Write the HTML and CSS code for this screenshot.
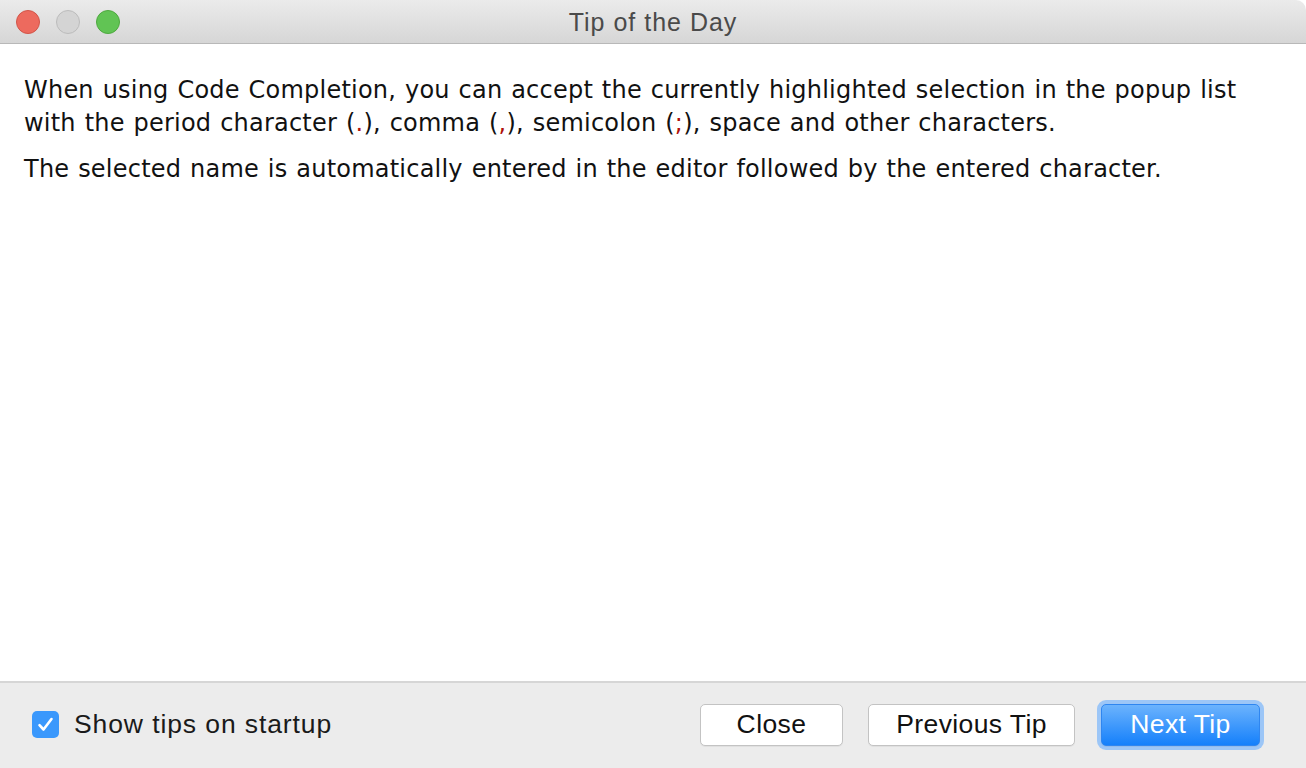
FILE: index.html
```html
<!DOCTYPE html>
<html>
<head>
<meta charset="utf-8">
<link rel="stylesheet" href="styles.css">
</head>
<body>
<div class="window">
  <div class="titlebar">
    <div class="lights">
      <span class="light red"></span>
      <span class="light gray"></span>
      <span class="light green"></span>
    </div>
    <div class="title">Tip of the Day</div>
  </div>
  <div class="content">
    <p class="p1">When using Code Completion, you can accept the currently highlighted selection in the popup list with the period character (<span class="hl">.</span>), comma (<span class="hl">,</span>), semicolon (<span class="hl">;</span>), space and other characters.</p>
    <p class="p2">The selected name is automatically entered in the editor followed by the entered character.</p>
  </div>
  <div class="footer">
    <label class="check">
      <span class="box"><svg width="27" height="27" viewBox="0 0 27 27"><path d="M7.5 14.2 L11.5 18.5 L19.5 8" fill="none" stroke="#fff" stroke-width="2.6" stroke-linecap="round" stroke-linejoin="round"/></svg></span>
      <span class="check-label">Show tips on startup</span>
    </label>
    <div class="buttons">
      <button class="btn close">Close</button>
      <button class="btn prev">Previous Tip</button>
      <span class="focus"><button class="btn primary">Next Tip</button></span>
    </div>
  </div>
</div>
</body>
</html>
```

FILE: styles.css
```css
html, body {
  margin: 0;
  padding: 0;
  width: 1306px;
  height: 768px;
  overflow: hidden;
  background: #ffffff;
}
.window {
  width: 1306px;
  height: 768px;
  display: flex;
  flex-direction: column;
  background: #fff;
}
.titlebar {
  height: 43px;
  flex: none;
  background: linear-gradient(#ebebeb, #d6d6d6);
  border-bottom: 1px solid #b8b8b8;
  border-top-right-radius: 10px;
  display: flex;
  align-items: center;
  position: relative;
}
.lights {
  display: flex;
  gap: 16px;
  padding-left: 16px;
  margin-top: 1px;
}
.light {
  width: 24px;
  height: 24px;
  border-radius: 50%;
  box-sizing: border-box;
}
.red { background: #ed6a5e; border: 1px solid #d25549; }
.gray { background: #d4d4d4; border: 1px solid #bcbcbc; }
.green { background: #61c454; border: 1px solid #4ea93f; }
.title {
  position: absolute;
  left: 0;
  right: 0;
  top: 0;
  height: 43px;
  line-height: 45px;
  text-align: center;
  font-family: "Liberation Sans", Arial, sans-serif;
  font-size: 25px;
  letter-spacing: 1px;
  color: #4a4a4a;
}
.content {
  flex: 1;
  padding: 30px 36px 0 24px;
  font-family: "DejaVu Sans", sans-serif;
  font-size: 24px;
  color: #111;
  letter-spacing: 0.22px;
  word-spacing: 1px;
}
.content p {
  margin: 0;
  line-height: 33px;
}
.p1 { margin-bottom: 13px !important; }
.hl { color: #b0110a; }
.footer {
  height: 87px;
  flex: none;
  box-sizing: border-box;
  background: #ececec;
  border-top: 2px solid #d6d6d6;
  display: flex;
  align-items: center;
  justify-content: space-between;
  padding: 0 42px 2px 32px;
  font-family: "Liberation Sans", Arial, sans-serif;
}
.check {
  display: flex;
  align-items: center;
  gap: 15px;
}
.box {
  width: 27px;
  height: 27px;
  border-radius: 5px;
  background: #3a98fc;
  display: block;
}
.box svg { display: block; }
.check-label {
  font-size: 26.5px;
  letter-spacing: 0.9px;
  color: #1a1a1a;
  font-family: "Liberation Sans", Arial, sans-serif;
}
.buttons {
  display: flex;
  align-items: center;
  gap: 25px;
}
.btn {
  font-family: "Liberation Sans", Arial, sans-serif;
  font-size: 26.5px;
  letter-spacing: 0.4px;
  height: 42px;
  box-sizing: border-box;
  border-radius: 5px;
  background: #fff;
  border: 1px solid #c3c3c3;
  color: #111;
  padding: 0;
  margin: 0;
  box-shadow: 0 1px 0 rgba(0,0,0,0.05);
}
.close { width: 143px; }
.prev { width: 207px; }
.focus {
  display: block;
  padding: 4px;
  border-radius: 9px;
  background: #9cc6f7;
  margin-left: -3px;
}
.primary {
  display: block;
  width: 159px;
  background: linear-gradient(#6cb3fd, #1580fb);
  border: 1px solid #2f86f0;
  color: #fff;
}
```
